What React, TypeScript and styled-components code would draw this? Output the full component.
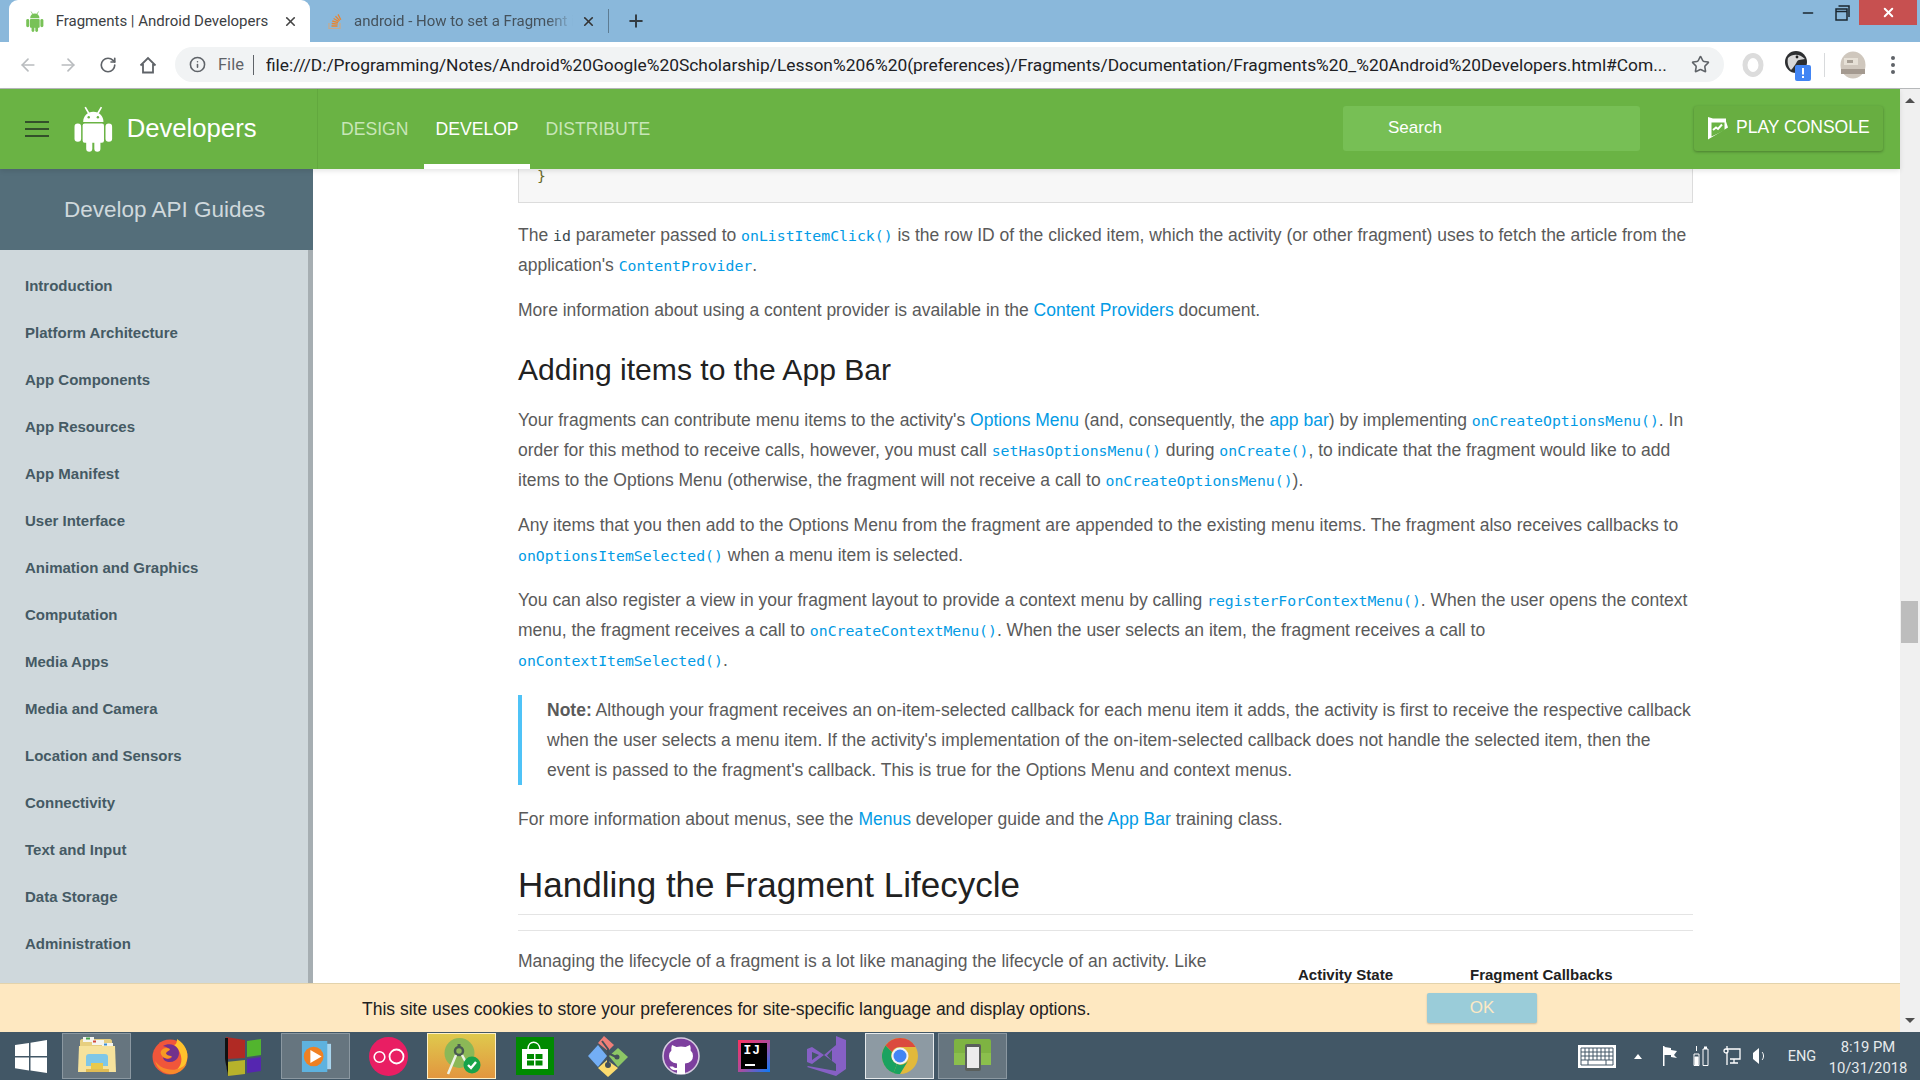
import React from "react";
import styled, { createGlobalStyle } from "styled-components";
import { ArrowLeft, ArrowRight, RotateCw, Star, Info, Plus, X, Minus } from "lucide-react";

const Global = createGlobalStyle`
  html, body { margin: 0; padding: 0; height: 100%; overflow: hidden; }
  #root { height: 1080px; }
  * { box-sizing: border-box; }
  body { font-family: "Liberation Sans", Arial, sans-serif; }
`;

const Screen = styled.div`
  width: 1920px; height: 1080px; display: flex; flex-direction: column; overflow: hidden; background: #fff;
`;

const TabStrip = styled.div`
  height: 42px; background: #8ab8db; display: flex; align-items: flex-start; padding-left: 9px; flex: none;
`;
const Tab = styled.div<{ $active?: boolean }>`
  height: 42px; display: flex; align-items: center; flex: none;
  width: ${p => (p.$active ? "301px" : "298px")};
  background: ${p => (p.$active ? "#fff" : "transparent")};
  border-radius: 9px 9px 0 0;
  padding: ${p => (p.$active ? "0 12px 0 17px" : "0 12px 0 17px")};
  color: ${p => (p.$active ? "#3c4043" : "#45525c")};
`;
const TabTitle = styled.span<{ $fade?: boolean }>`
  font-family: Roboto, sans-serif; font-size: 15px; margin-left: ${p => (p.$fade ? "11px" : "12px")}; flex: 1; white-space: nowrap; overflow: hidden;
  margin-top: -1px;
  ${p => p.$fade && "-webkit-mask-image: linear-gradient(90deg, #000 88%, transparent 100%); margin-right: 8px;"}
`;
const TabDivider = styled.div`
  width: 1px; height: 24px; margin: 9px 0 0 0; background: #5d7c93;
`;
const NewTab = styled.div`
  width: 54px; height: 42px; display: flex; align-items: center; justify-content: center; color: #333c43;
`;
const WindowControls = styled.div`
  margin-left: auto; margin-right: 3px; display: flex; height: 25px; align-items: flex-start;
`;
const WinButton = styled.div<{ $w: number; $close?: boolean }>`
  width: ${p => p.$w}px; height: 25px; display: flex; align-items: center; justify-content: center;
  background: ${p => (p.$close ? "#c75050" : "transparent")}; color: ${p => (p.$close ? "#fff" : "#1b2730")};
`;

const Toolbar = styled.div`
  height: 47px; flex: none; background: #fff; border-bottom: 1px solid #b6b8ba; display: flex; align-items: center; position: relative; padding-bottom: 1px;
`;
const NavIcons = styled.div`
  display: flex; width: 175px; padding-left: 16px; gap: 16px; flex: none;
`;
const NavIcon = styled.div<{ $dim?: boolean }>`
  width: 24px; height: 24px; display: flex; align-items: center; justify-content: center;
  color: ${p => (p.$dim ? "#b9bcbf" : "#5f6368")};
`;
const Omnibox = styled.div`
  width: 1549px; height: 35px; flex: none; background: #f1f3f4; border-radius: 18px; display: flex; align-items: center; padding-left: 14px; color: #5f6368;
`;
const FileLabel = styled.span`
  font-family: Roboto, sans-serif; font-size: 16.5px; color: #5f6368; margin-left: 12px;
`;
const OmniDivider = styled.span`
  width: 1px; height: 20px; background: #5f6368; margin: 0 12px 0 9px;
`;
const Url = styled.span`
  font-family: Roboto, sans-serif; font-size: 17.37px; color: #202124; white-space: nowrap; flex: 1; overflow: hidden;
`;
const StarSlot = styled.div`
  width: 35px; flex: none; display: flex; color: #5f6368; padding-left: 2px;
`;
const ToolRight = styled.div`
  flex: 1; display: flex; align-items: center; padding-left: 17px;
`;
const ToolSep = styled.div`
  width: 1px; height: 24px; background: #d8dadc; margin: 0 15px 0 11px;
`;
const Dots = styled.div`
  margin-left: 25px; display: flex; flex-direction: column; gap: 3px;
  & > i { width: 4px; height: 4px; border-radius: 50%; background: #5f6368; display: block; }
`;

const WebArea = styled.div`
  flex: 1; min-height: 0; display: flex;
`;
const Page = styled.div`
  width: 1900px; display: flex; flex-direction: column; min-height: 0; position: relative;
`;
const Scrollbar = styled.div`
  width: 20px; background: #f0f0f0; position: relative; display: flex; flex-direction: column; align-items: center; justify-content: space-between; padding: 9px 0;
`;
const Arrow = styled.div<{ $down?: boolean }>`
  width: 0; height: 0; border-left: 5px solid transparent; border-right: 5px solid transparent;
  ${p => (p.$down ? "border-top: 5px solid #505050;" : "border-bottom: 5px solid #505050;")}
`;
const Thumb = styled.div`
  position: absolute; left: 1px; top: 512px; width: 17px; height: 42px; background: #bdbdbd;
`;

const Header = styled.header`
  height: 80px; flex: none; background: #6ab344; display: flex; align-items: center; position: relative; z-index: 2;
  box-shadow: 0 2px 5px rgba(0, 0, 0, 0.1);
`;
const Brand = styled.div`
  width: 318px; height: 100%; flex: none; border-right: 1px solid #62a83e; display: flex; align-items: center; padding-left: 25px;
`;
const Burger = styled.div`
  width: 24px; display: flex; flex-direction: column; gap: 5px; margin-right: 25px; margin-top: -1px;
  & > i { display: block; height: 2px; background: #33502a; }
`;
const BrandName = styled.span`
  font-size: 25.7px; color: #fff; margin-left: 14px; margin-top: -1px;
`;
const TopNav = styled.nav`
  display: flex; gap: 5px; height: 100%; margin-left: 12px;
`;
const TopLink = styled.a<{ $active?: boolean }>`
  padding: 0 11px; height: 100%; display: flex; align-items: center; font-size: 17.6px;
  color: ${p => (p.$active ? "#fff" : "#c8e6b8")};
  border-bottom: 5px solid ${p => (p.$active ? "#fff" : "transparent")};
  padding-top: 5px;
`;
const SearchBox = styled.div`
  margin-left: auto; width: 297px; height: 45px; margin-top: -2px; background: #77bf55; border-radius: 3px; display: flex; align-items: center; padding: 0 0 1px 45px; color: #fff; font-size: 17px;
`;
const ConsoleButton = styled.div`
  width: 189px; height: 45px; margin: -2px 17px 0 54px; background: #68ae41; border-radius: 3px; box-shadow: 0 1px 3px rgba(0,0,0,.3);
  display: flex; align-items: center; padding: 0 0 1px 13px; color: #fff; font-size: 17.5px; gap: 8px;
`;

const Body = styled.div`
  flex: 1; min-height: 0; display: flex; overflow: hidden;
`;
const Sidebar = styled.aside`
  width: 313px; flex: none; background: #cfd8dc; display: flex; flex-direction: column; border-right: 5px solid #a6aeb2;
  position: relative; 
`;
const SideTitle = styled.div`
  height: 81px; margin-right: -5px; background: #546e7a; color: #cfd8dc; font-size: 22.5px; display: flex; align-items: center; padding: 1px 0 0 64px; flex: none; position: relative;
`;
const SideList = styled.ul`
  list-style: none; margin: 0; padding: 12px 0 0 25px;
`;
const SideItem = styled.li`
  height: 47px; line-height: 47px; font-weight: 700; font-size: 15px; color: #455a64;
`;

const Content = styled.main`
  flex: 1; min-width: 0; padding: 0 207px 0 205px; overflow: hidden; color: #5a5a5a; font-size: 17.5px; line-height: 30px;
`;
const CodeBox = styled.div`
  height: 34px; background: #f7f7f7; border: 1px solid #dcdcdc; border-top: 0; padding-left: 18px; color: #6a6a2a;
  font-family: "DejaVu Sans Mono", monospace; font-size: 14.72px; line-height: 14px;
`;
const P = styled.p`
  margin: 15px 0;
  &:first-of-type { margin-top: 17px; }
`;
const A = styled.a`
  color: #039be5;
`;
const C = styled.code<{ $link?: boolean }>`
  font-family: "DejaVu Sans Mono", monospace; font-size: 14.8px; line-height: 1; color: ${p => (p.$link ? "#039be5" : "#37474f")};
`;
const H2 = styled.h2`
  margin: 25px 0 15px; font-weight: 400; font-size: 30.1px; line-height: 40px; color: #212121;
`;
const Note = styled.blockquote`
  margin: 20px 0 19px; border-left: 4px solid #4fc3f7; padding-left: 25px;
`;
const Strong = styled.b`
  font-weight: 700;
`;
const H2Rule = styled.h2`
  margin: 29px 0 0; padding-bottom: 7px; font-weight: 400; font-size: 35px; line-height: 44px; color: #212121; border-bottom: 1px solid #e4e4e4;
`;
const Rule = styled.div`
  height: 1px; background: #e4e4e4; margin-top: 15px; margin-bottom: 15px;
`;
const FloatTable = styled.div`
  float: right; width: 408px; margin: 21px 0 0 40px; padding-left: 13px; display: grid; grid-template-columns: 172px 1fr;
  font-weight: 700; font-size: 15px; line-height: 16px; color: #212121;
`;

const Cookie = styled.div`
  height: 49px; flex: none; background: #fee8c1; border-top: 1px solid #e3d3ac; display: flex; align-items: center; padding-left: 362px; color: #212121; font-size: 17.5px; position: relative; z-index: 2;
`;
const OkButton = styled.div`
  margin-left: auto; margin-right: 363px; width: 110px; height: 30px; border-radius: 2px; background: #9accd9; color: #fde9c5; font-size: 17px;
  display: flex; align-items: center; justify-content: center; box-shadow: 0 1px 2px rgba(0,0,0,.2);
`;
const CookieText = styled.span`
  margin-top: 2px;
`;

const Taskbar = styled.div`
  height: 48px; flex: none; background: #425766; display: flex; align-items: center;
`;
const StartSlot = styled.div`
  width: 62px; display: flex; justify-content: center; flex: none;
`;
const TaskList = styled.div`
  display: flex; gap: 4px; flex: none;
`;
const TaskItem = styled.div<{ $state?: "open" | "focus" | "warn" }>`
  width: 69px; height: 46px; display: flex; align-items: center; justify-content: center;
  ${p => p.$state === "open" && "background: #66757f; border: 1px solid #8b98a1;"}
  ${p => p.$state === "focus" && "background: #8d9aa3; border: 1px solid #e6eaec;"}
  ${p => p.$state === "warn" && "background: linear-gradient(#dfc94d, #e2963f); border: 1px solid #fff1c8;"}
`;
const Tray = styled.div`
  margin-left: auto; display: flex; align-items: center; color: #fff; height: 100%;
`;
const TrayIcon = styled.div<{ $w: number }>`
  width: ${p => p.$w}px; display: flex; justify-content: center; align-items: center; flex: none;
`;
const Lang = styled.span`
  font-family: Roboto, sans-serif; font-size: 14.5px; width: 48px; text-align: center; color: #e6eaec; flex: none;
`;
const Clock = styled.div`
  width: 94px; text-align: center; font-family: Roboto, sans-serif; font-size: 14.8px; line-height: 21px; color: #e6eaec; flex: none; padding: 4px 10px 0 0; white-space: nowrap;
`;

const AndroidSvg = ({ size, color }: { size: number; color: string }) => (
  <svg width={size * 0.84} height={size} viewBox="0 0 38 45" fill={color}>
    <path d="M9 15.5C9 10 13 5.5 19 5.5S29 10 29 15.5Z" />
    <path d="M11 1l3.5 6M27 1l-3.5 6" stroke={color} strokeWidth="1.6" />
    <rect x="8.5" y="17" width="21" height="19" rx="2" />
    <rect x="0.5" y="17" width="6.5" height="18" rx="3.2" />
    <rect x="31" y="17" width="6.5" height="18" rx="3.2" />
    <rect x="12" y="32" width="6" height="13" rx="3" />
    <rect x="20" y="32" width="6" height="13" rx="3" />
    <circle cx="14.5" cy="11" r="1.2" fill="#6ab344" opacity={color === "#fff" ? 1 : 0} />
    <circle cx="23.5" cy="11" r="1.2" fill="#6ab344" opacity={color === "#fff" ? 1 : 0} />
  </svg>
);

const HomeIcon = () => (
  <svg width="20" height="20" viewBox="0 0 20 20" fill="none" stroke="#5f6368" strokeWidth="1.8">
    <path d="M2.5 10.5 10 3l7.5 7.5M5 9v8.5h10V9" />
  </svg>
);

const SoIcon = () => (
  <svg width="16" height="18" viewBox="0 0 16 18" fill="none">
    <path d="M2 11v5.5h11V11" stroke="#c9a98a" strokeWidth="1.2" />
    <path d="M4.5 14h6M4.7 11.5l6 .6M5.3 9l5.8 1.6M6.6 6.5l5.2 3M8.5 4.2l4.2 4.4M11 2.4l2.8 5.4" stroke="#e9852f" strokeWidth="1.3" />
  </svg>
);

const ConsoleIcon = () => (
  <svg width="21" height="24" viewBox="0 0 21 24">
    <path d="M1 1l5 1.500h13v3l2 6-20 12z" fill="#fff" />
    <path d="M4.500 6.500h13v8l-13 6z" fill="#6ab344" />
    <path d="M6 14l3-2.500 2 1.500 4-4.500" stroke="#fff" strokeWidth="2" fill="none" />
  </svg>
);

const OperaRing = () => (
  <svg width="24" height="26" viewBox="0 0 24 26" fill="none">
    <ellipse cx="12" cy="13" rx="8" ry="9.5" stroke="#dcdcdc" strokeWidth="5" />
  </svg>
);

const BirdExt = () => (
  <svg width="30" height="32" viewBox="0 0 30 32">
    <circle cx="13" cy="13" r="11" fill="#2d2f31" />
    <path d="M5 9c5-5 12-4 17 1l-6 1c-2 0-3 5-8 10-3-3-4-8-3-12z" fill="#d8d8d8" />
    <circle cx="14" cy="8" r="1.4" fill="#222" />
    <rect x="12" y="16" width="16" height="16" rx="2" fill="#4285f4" />
    <rect x="19" y="19" width="2" height="6.5" fill="#fff" />
    <rect x="19" y="27" width="2" height="2" fill="#fff" />
  </svg>
);
const BirdSlot = styled.div`
  margin-left: 18px; display: flex;
`;

const Avatar = () => (
  <svg width="26" height="28" viewBox="0 0 26 28">
    <ellipse cx="13" cy="14" rx="12.5" ry="13.5" fill="#cfc7bd" />
    <rect x="4" y="7" width="14" height="7" fill="#e6e0d6" />
    <rect x="1" y="18" width="24" height="5" fill="#a49a90" />
    <rect x="7" y="9" width="6" height="3" fill="#a8a096" />
  </svg>
);

const WinLogo = () => (
  <svg width="32" height="33" viewBox="0 0 32 33" fill="#fff">
    <path d="M0 5l14-2v13H0zM15.5 2.8 32 0v16H15.5zM0 17.5h14v13L0 28.300zM15.500 17.500H32V33l-16.500-2.400z" />
  </svg>
);
const ExplorerIcon = () => (
  <svg width="40" height="40" viewBox="0 0 40 40">
    <path d="M3 5c0-1 1-2 2-2h28c1 0 2 1 2 2v28H3z" fill="#e7cf80" />
    <rect x="6" y="1" width="11" height="5" fill="#f4f4ee" />
    <rect x="9" y="1.500" width="4" height="2" fill="#48a24a" />
    <rect x="15" y="4" width="12" height="5" fill="#f4f4ee" />
    <rect x="16" y="4.500" width="3" height="2" fill="#d24a3c" />
    <rect x="25" y="7" width="11" height="5" fill="#f4f4ee" />
    <rect x="27" y="7.500" width="3" height="2" fill="#3b8fd4" />
    <path d="M2 10h36l1 26H1z" fill="#f6e29c" />
    <path d="M9 21c0-2 1-3 3-3h16c2 0 3 1 3 3v9H9z" fill="#7fc7e8" />
    <rect x="14" y="27" width="12" height="6" fill="#e9c94d" />
    <rect x="9" y="33" width="23" height="3" fill="#e0bc54" />
  </svg>
);
const FirefoxIcon = () => (
  <svg width="38" height="38" viewBox="0 0 38 38">
    <circle cx="19" cy="20" r="17.500" fill="#f0563a" />
    <path d="M26 2c8 5 12 13 10 21-2 9-10 14-19 14 10-2 15-10 13-18-1-5-4-9-7-11 2 0 3-3 3-6z" fill="#ffc22c" />
    <path d="M4 24c2 8 9 13 16 13s13-4 16-11c-5 6-13 8-20 6-5-1-9-4-12-8z" fill="#f98a2a" />
    <path d="M12 9c5-3 12-2 15 3 3 6-1 13-8 13-4 0-7-2-7-5 2 2 7 3 9 0-3 0-6-1-6-4 1-2 3-2 4-3-1-2-3-3-7-4z" fill="#5c2a9b" opacity=".85" />
    <path d="M10 14c2-3 5-4 9-2-1 2-3 2-4 4 0 2 3 3 6 3-2 3-6 3-9 1-2-2-3-4-2-6z" fill="#f59a24" />
  </svg>
);
const SquaresIcon = () => (
  <svg width="38" height="40" viewBox="0 0 38 40">
    <path d="M2 1l19 3v18l-19 1z" fill="#b02a24" />
    <path d="M23 5l14-2v16l-14 2z" fill="#52b52e" />
    <path d="M2 26l19-2v14l-17 2z" fill="#b7b22b" />
    <path d="M23 23l14-2v14l-14 2z" fill="#5526b0" />
    <path d="M1 2v21l3 17 0-15V2z" fill="#111" />
  </svg>
);
const MediaIcon = () => (
  <svg width="32" height="31" viewBox="0 0 34 33">
    <rect x="24" y="3" width="9" height="27" fill="#a8d5ee" />
    <rect x="2" y="0" width="27" height="33" fill="#5eb2df" />
    <circle cx="14.500" cy="16.500" r="10.500" fill="#f08022" />
    <path d="M11 9.500 23 16.500 11 23.500z" fill="#fff" />
  </svg>
);
const FlickrLike = () => (
  <svg width="39" height="39" viewBox="0 0 39 39" fill="none">
    <circle cx="19.500" cy="19.500" r="19.500" fill="#e91e63" />
    <circle cx="10.500" cy="20" r="5.300" stroke="#fff" strokeWidth="1.600" />
    <circle cx="27.500" cy="19.500" r="7" stroke="#fff" strokeWidth="1.800" />
  </svg>
);
const StudioIcon = () => (
  <svg width="40" height="40" viewBox="0 0 40 40" fill="none">
    <circle cx="17.500" cy="17" r="15" fill="#8bb857" />
    <circle cx="17" cy="15" r="4" stroke="#4a5a52" strokeWidth="2.500" />
    <path d="M17 8v3" stroke="#4a5a52" strokeWidth="3" />
    <path d="M14 19 6 38M20 19l6 11" stroke="#eef2e6" strokeWidth="2.500" />
    <circle cx="30" cy="29" r="8.500" fill="#17a34a" />
    <path d="m26 29 3 3 5-6" stroke="#fff" strokeWidth="2.400" />
  </svg>
);
const StoreIcon = () => (
  <svg width="38" height="38" viewBox="0 0 38 38" fill="none">
    <rect width="38" height="38" fill="#008a00" />
    <path d="M12 12c0-9 11-9 12 0" stroke="#fff" strokeWidth="1.500" />
    <path d="M6 12h26v20H6z" fill="#fff" />
    <path d="M11 17h7v5h-7zM19.500 17h7v5h-7zM11 23.500h7v5h-7zM19.500 23.500h7v5h-7z" fill="#008a00" />
  </svg>
);
const GitIcon = () => (
  <svg width="40" height="42" viewBox="0 0 40 42" fill="none">
    <path d="M0 21 10 10 19 21 10 32z" fill="#73aef5" />
    <path d="M21 21 30 13 40 22 30 32z" fill="#8cc665" />
    <path d="M10 8 16 1 26 10 20 16z" fill="#ef7f78" />
    <path d="M10 33 19 25 30 33 20 42z" fill="#fcdc6f" />
    <path d="M14 6l6 8v17M20 18l8 4" stroke="#43505a" strokeWidth="2" />
    <circle cx="20" cy="30" r="3" fill="#43505a" />
    <circle cx="29" cy="22" r="2.500" fill="#43505a" />
  </svg>
);
const GithubIcon = () => (
  <svg width="38" height="38" viewBox="0 0 38 38">
    <circle cx="19" cy="19" r="18" fill="#7d3f9e" stroke="#d6cbe0" strokeWidth="1.600" />
    <path d="M10 8l4.500 2q4.500-1.200 9 0L28 8q1 3 .6 5.500 2.400 2 2.400 5.500 0 6.500-8 7.500V37h-8v-4q-5.500 1-7.500-3.500h3.500q1 2 4 1.300v-4.300q-8-1-8-7.500 0-3.500 2.400-5.500Q9 11 10 8z" fill="#fff" />
  </svg>
);
const IjFrame = styled.div`
  width: 32px; height: 32px; padding: 3px; background: linear-gradient(135deg, #fe315d 0%, #b04a9c 50%, #087cfa 100%); flex: none;
`;
const IjInner = styled.div`
  width: 100%; height: 100%; background: #000; position: relative; color: #fff; font: 700 13px/12px "Liberation Mono", monospace; padding: 2px 0 0 3px; letter-spacing: 1px;
  &::after { content: ""; position: absolute; left: 4px; bottom: 3px; width: 10px; height: 2px; background: #fff; }
`;
const VsIcon = () => (
  <svg width="40" height="40" viewBox="0 0 40 40" fill="#8660c5">
    <path d="M29 0l10 4v29l-10 7L0 31l1-1 28 5zM29 9 17 19 5 11 0 13v13l5 2 12-9 12 9zM5 16l7 3-7 5zM25 14v11l-5-5.500z" fillRule="evenodd" />
  </svg>
);
const ChromeIcon = () => (
  <svg width="36" height="36" viewBox="0 0 36 36">
    <circle cx="18" cy="18" r="18" fill="#e2b93b" />
    <path d="M18 0a18 18 0 0 1 15.600 9H18a9 9 0 0 0-8 5L3.500 7.500A18 18 0 0 1 18 0z" fill="#db4a3e" />
    <path d="M3.500 7.500 10 14a9 9 0 0 0 5 12l-3.500 9A18 18 0 0 1 3.500 7.500z" fill="#1aa260" />
    <path d="M15 26a9 9 0 0 0 11 -3l-8 13h-2a18 18 0 0 1-4.500-1z" fill="#1aa260" />
    <circle cx="18" cy="18" r="8.500" fill="#f1f3f4" />
    <circle cx="18" cy="18" r="6.500" fill="#4285f4" />
  </svg>
);
const PhoneIcon = () => (
  <svg width="38" height="36" viewBox="0 0 38 36">
    <rect y="1" width="37" height="26" rx="2" fill="#7eb342" />
    <rect y="15" width="37" height="12" fill="#8bbf4d" />
    <rect x="11" y="6" width="16" height="27" rx="2" fill="#5a5f5c" />
    <rect x="13" y="9" width="12" height="21" fill="#ececec" />
  </svg>
);

const KeyboardIcon = () => (
  <svg width="38" height="23" viewBox="0 0 38 23">
    <rect width="38" height="23" fill="#fff" />
    <g stroke="#425766" strokeWidth="1" fill="none">
      <path d="M3 3h32v17H3zM3 7h32M3 11h32M3 15h32M7 3v12M11 3v12M15 3v12M19 3v12M23 3v12M27 3v12M31 3v12M10 15v5M28 15v5" />
    </g>
  </svg>
);
const FlagIcon = () => (
  <svg width="16" height="20" viewBox="0 0 16 20" fill="#fff"><path d="M1 0h1.500v20H1zM2.500 1 9 2v2l6 1-3 4 3 3-6-1V9L2.500 9z" /></svg>
);
const BatteryIcon = () => (
  <svg width="16" height="20" viewBox="0 0 16 20" fill="none" stroke="#fff"><path d="M3.500 0v5M1 8h5v11.500H1zM10 3h5v16.500h-5z" /><path d="M2 11h3v8H2z" fill="#fff" /><rect x="11.500" y="1" width="2" height="1.500" fill="#fff" /></svg>
);
const NetIcon = () => (
  <svg width="18" height="20" viewBox="0 0 18 20" fill="none" stroke="#fff" strokeWidth="1.300"><path d="M4 3h13v10H7M7 17h8M11 13v4" /><path d="M4 0v19" /><circle cx="3" cy="5" r="2" fill="#425766" /></svg>
);
const VolumeIcon = () => (
  <svg width="16" height="20" viewBox="0 0 16 20" fill="#fff"><path d="M7 2v16L1 13V7z" /><path d="M10 6c2 2 2 6 0 8" stroke="#fff" fill="none" /></svg>
);
const TrayCaret = styled.div`
  width: 0; height: 0; border-left: 4px solid transparent; border-right: 4px solid transparent; border-bottom: 5px solid #fff;
`;

const sideItems = [
  "Introduction", "Platform Architecture", "App Components", "App Resources", "App Manifest", "User Interface",
  "Animation and Graphics", "Computation", "Media Apps", "Media and Camera", "Location and Sensors", "Connectivity",
  "Text and Input", "Data Storage", "Administration",
];

export default function App() {
  return (
    <Screen>
      <Global />
      <TabStrip>
        <Tab $active>
          <AndroidSvg size={21} color="#78c257" />
          <TabTitle>Fragments | Android Developers</TabTitle>
          <X size={15} strokeWidth={2.6} color="#444" />
        </Tab>
        <Tab>
          <SoIcon />
          <TabTitle $fade>android - How to set a Fragment in a layout</TabTitle>
          <X size={15} strokeWidth={2.6} color="#333" />
        </Tab>
        <TabDivider />
        <NewTab><Plus size={20} strokeWidth={2.4} /></NewTab>
        <WindowControls>
          <WinButton $w={34}><Minus size={16} strokeWidth={2} /></WinButton>
          <WinButton $w={34}>
            <svg width="15" height="16" viewBox="0 0 15 16" fill="none" stroke="#1b2730" strokeWidth="1.500"><path d="M1 4h11v11H1zM1 6.500h11M3.500 1H14v11" /></svg>
          </WinButton>
          <WinButton $w={58} $close><X size={15} strokeWidth={3.2} /></WinButton>
        </WindowControls>
      </TabStrip>
      <Toolbar>
        <NavIcons>
          <NavIcon $dim><ArrowLeft size={20} strokeWidth={2} /></NavIcon>
          <NavIcon $dim><ArrowRight size={20} strokeWidth={2} /></NavIcon>
          <NavIcon><RotateCw size={18} strokeWidth={2.2} /></NavIcon>
          <NavIcon><HomeIcon /></NavIcon>
        </NavIcons>
        <Omnibox>
          <Info size={17} strokeWidth={2.2} />
          <FileLabel>File</FileLabel>
          <OmniDivider />
          <Url>file:///D:/Programming/Notes/Android%20Google%20Scholarship/Lesson%206%20(preferences)/Fragments/Documentation/Fragments%20_%20Android%20Developers.html#Com...</Url>
          <StarSlot><Star size={19} strokeWidth={2} /></StarSlot>
        </Omnibox>
        <ToolRight>
          <OperaRing />
          <BirdSlot><BirdExt /></BirdSlot>
          <ToolSep />
          <Avatar />
          <Dots><i /><i /><i /></Dots>
        </ToolRight>
      </Toolbar>
      <WebArea>
        <Page>
          <Header>
            <Brand>
              <Burger><i /><i /><i /></Burger>
              <AndroidSvg size={46} color="#fff" />
              <BrandName>Developers</BrandName>
            </Brand>
            <TopNav>
              <TopLink>DESIGN</TopLink>
              <TopLink $active>DEVELOP</TopLink>
              <TopLink>DISTRIBUTE</TopLink>
            </TopNav>
            <SearchBox>Search</SearchBox>
            <ConsoleButton><ConsoleIcon />PLAY CONSOLE</ConsoleButton>
          </Header>
          <Body>
            <Sidebar>
              <SideTitle>Develop API Guides</SideTitle>
              <SideList>
                {sideItems.map(s => <SideItem key={s}>{s}</SideItem>)}
              </SideList>
            </Sidebar>
            <Content>
              <CodeBox>{"}"}</CodeBox>
              <P>The <C>id</C> parameter passed to <C $link>onListItemClick()</C> is the row ID of the clicked item, which the activity (or other fragment) uses to fetch the article from the application's <C $link>ContentProvider</C>.</P>
              <P>More information about using a content provider is available in the <A>Content Providers</A> document.</P>
              <H2>Adding items to the App Bar</H2>
              <P>Your fragments can contribute menu items to the activity's <A>Options Menu</A> (and, consequently, the <A>app bar</A>) by implementing <C $link>onCreateOptionsMenu()</C>. In order for this method to receive calls, however, you must call <C $link>setHasOptionsMenu()</C> during <C $link>onCreate()</C>, to indicate that the fragment would like to add items to the Options Menu (otherwise, the fragment will not receive a call to <C $link>onCreateOptionsMenu()</C>).</P>
              <P>Any items that you then add to the Options Menu from the fragment are appended to the existing menu items. The fragment also receives callbacks to <C $link>onOptionsItemSelected()</C> when a menu item is selected.</P>
              <P>You can also register a view in your fragment layout to provide a context menu by calling <C $link>registerForContextMenu()</C>. When the user opens the context menu, the fragment receives a call to <C $link>onCreateContextMenu()</C>. When the user selects an item, the fragment receives a call to <C $link>onContextItemSelected()</C>.</P>
              <Note><Strong>Note:</Strong> Although your fragment receives an on-item-selected callback for each menu item it adds, the activity is first to receive the respective callback when the user selects a menu item. If the activity's implementation of the on-item-selected callback does not handle the selected item, then the event is passed to the fragment's callback. This is true for the Options Menu and context menus.</Note>
              <P>For more information about menus, see the <A>Menus</A> developer guide and the <A>App Bar</A> training class.</P>
              <H2Rule>Handling the Fragment Lifecycle</H2Rule>
              <Rule />
              <FloatTable><span>Activity State</span><span>Fragment Callbacks</span></FloatTable>
              <P>Managing the lifecycle of a fragment is a lot like managing the lifecycle of an activity. Like activities, a fragment can exist in three states:</P>
            </Content>
          </Body>
          <Cookie>
            <CookieText>This site uses cookies to store your preferences for site-specific language and display options.</CookieText>
            <OkButton>OK</OkButton>
          </Cookie>
        </Page>
        <Scrollbar>
          <Arrow />
          <Thumb />
          <Arrow $down />
        </Scrollbar>
      </WebArea>
      <Taskbar>
        <StartSlot><WinLogo /></StartSlot>
        <TaskList>
          <TaskItem $state="open"><ExplorerIcon /></TaskItem>
          <TaskItem><FirefoxIcon /></TaskItem>
          <TaskItem><SquaresIcon /></TaskItem>
          <TaskItem $state="open"><MediaIcon /></TaskItem>
          <TaskItem><FlickrLike /></TaskItem>
          <TaskItem $state="warn"><StudioIcon /></TaskItem>
          <TaskItem><StoreIcon /></TaskItem>
          <TaskItem><GitIcon /></TaskItem>
          <TaskItem><GithubIcon /></TaskItem>
          <TaskItem><IjFrame><IjInner>IJ</IjInner></IjFrame></TaskItem>
          <TaskItem><VsIcon /></TaskItem>
          <TaskItem $state="focus"><ChromeIcon /></TaskItem>
          <TaskItem $state="open"><PhoneIcon /></TaskItem>
        </TaskList>
        <Tray>
          <TrayIcon $w={38}><KeyboardIcon /></TrayIcon>
          <TrayIcon $w={44}><TrayCaret /></TrayIcon>
          <TrayIcon $w={20}><FlagIcon /></TrayIcon>
          <TrayIcon $w={42}><BatteryIcon /></TrayIcon>
          <TrayIcon $w={20}><NetIcon /></TrayIcon>
          <TrayIcon $w={36}><VolumeIcon /></TrayIcon>
          <Lang>ENG</Lang>
          <Clock>8:19 PM<br />10/31/2018</Clock>
        </Tray>
      </Taskbar>
    </Screen>
  );
}
